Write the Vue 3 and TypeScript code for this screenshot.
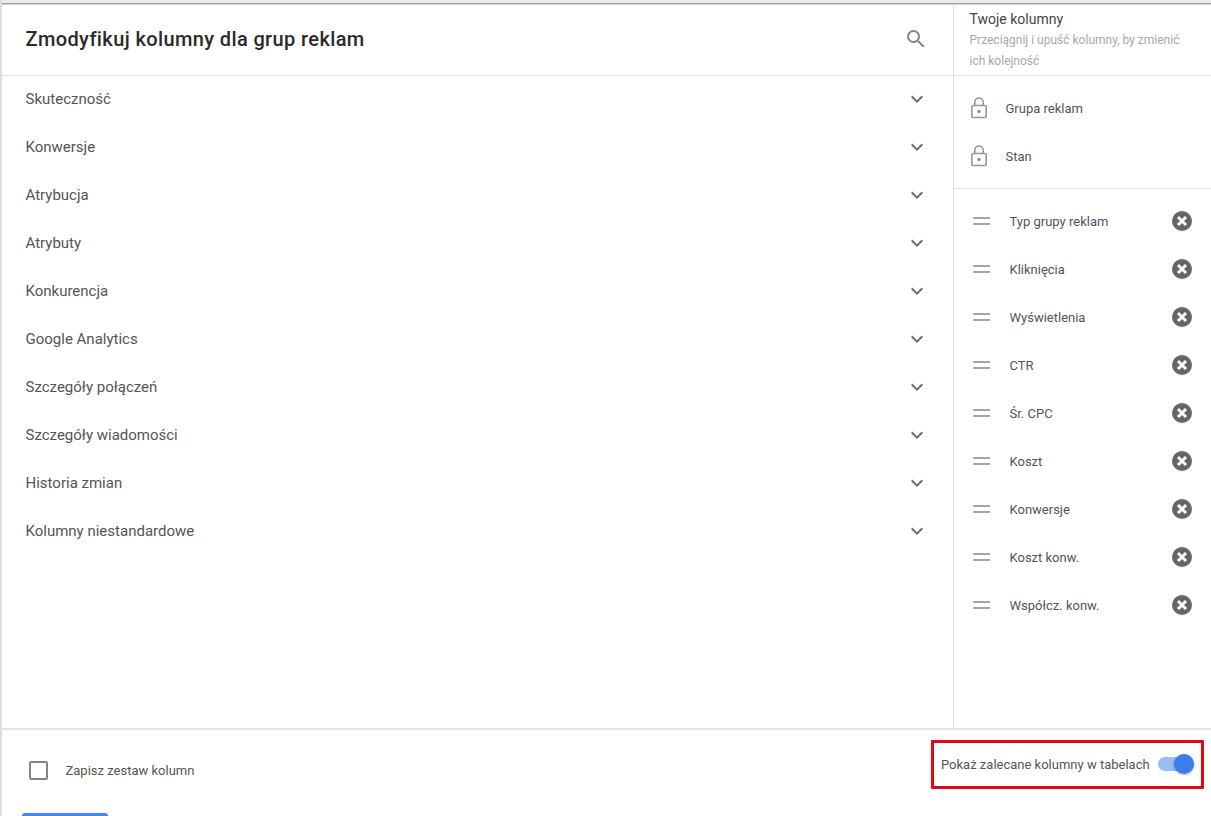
<script setup lang="ts">
const categories: string[] = ['Skuteczność','Konwersje','Atrybucja','Atrybuty','Konkurencja','Google Analytics','Szczegóły połączeń','Szczegóły wiadomości','Historia zmian','Kolumny niestandardowe']
const locked: string[] = ['Grupa reklam','Stan']
const cols: string[] = ['Typ grupy reklam','Kliknięcia','Wyświetlenia','CTR','Śr. CPC','Koszt','Konwersje','Koszt konw.','Współcz. konw.']
</script>

<template>
  <div class="page">
    <div class="main">
      <div class="left">
        <header class="head">
          <h1>Zmodyfikuj kolumny dla grup reklam</h1>
          <svg class="search" width="24" height="24" viewBox="0 0 24 24"><path fill="#858585" d="M15.5 14h-.79l-.28-.27A6.47 6.47 0 0 0 16 9.5 6.5 6.5 0 1 0 9.5 16c1.61 0 3.09-.59 4.23-1.57l.27.28v.79l5 4.99L20.49 19l-4.99-5zm-6 0C7.01 14 5 11.99 5 9.5S7.01 5 9.5 5 14 7.01 14 9.5 11.99 14 9.5 14z"/></svg>
        </header>
        <ul class="cats">
          <li v-for="c in categories" :key="c">
            <span>{{ c }}</span>
            <svg width="24" height="24" viewBox="0 0 24 24"><path fill="#6e6e6e" d="M7.41 8.59 12 13.17l4.59-4.58L18 10l-6 6-6-6z"/></svg>
          </li>
        </ul>
      </div>
      <aside class="right">
        <div class="r-head">
          <div class="r-title">Twoje kolumny</div>
          <div class="r-sub">Przeciągnij i upuść kolumny, by zmienić ich kolejność</div>
        </div>
        <div class="locked">
          <div v-for="l in locked" :key="l" class="lock-row">
            <svg width="24" height="24" viewBox="0 0 24 24" fill="none"><rect x="4.800" y="9.500" width="14.400" height="12" rx="1.200" stroke="#969696" stroke-width="1.600"/><path d="M7.800 9.500V6.200a4.200 4.200 0 0 1 8.400 0v3.300" stroke="#969696" stroke-width="1.600"/><circle cx="12" cy="15.500" r="1.500" fill="#777"/></svg>
            <span>{{ l }}</span>
          </div>
        </div>
        <div class="cols">
          <div v-for="c in cols" :key="c" class="col-row">
            <span class="drag"></span>
            <span class="col-name">{{ c }}</span>
            <svg width="24" height="24" viewBox="0 0 24 24"><circle cx="12" cy="12" r="10" fill="#666"/><path d="M8 8l8 8M16 8l-8 8" stroke="#fff" stroke-width="3"/></svg>
          </div>
        </div>
      </aside>
    </div>
    <footer class="foot">
      <div class="save">
        <span class="box"></span>
        <span>Zapisz zestaw kolumn</span>
      </div>
      <div class="highlight">
        <span>Pokaż zalecane kolumny w tabelach</span>
        <span class="toggle"><span class="knob"></span></span>
      </div>
      <button class="apply" type="button" aria-label="Zastosuj"></button>
    </footer>
  </div>
</template>

<style>
html, body { margin: 0; background: #fff; overflow: hidden; }
</style>

<style scoped>
.page {
  width: 1211px; height: 816px; box-sizing: border-box; overflow: hidden;
  background: linear-gradient(#ececec 0 3px, #a0a0a0 3px 4px, #d8d8d8 4px 5px, #fff 5px);
  border-left: 2px solid #dedede;
  padding-top: 5px; display: flex; flex-direction: column;
  font-family: Roboto, "Liberation Sans", sans-serif; color: #3c4043;
}
.main { height: 723px; display: flex; border-bottom: 2px solid #e4e4e4; flex: none; }
.left { width: 951px; flex: none; border-right: 1px solid #e0e0e0; }
.head { height: 71px; box-sizing: border-box; display: flex; align-items: center; justify-content: space-between; padding: 0 25px 2px 23.500px; border-bottom: 1px solid #e0e0e0; }
h1 { margin: 0; font-size: 20px; font-weight: 500; color: #2a2a2a; letter-spacing: .38px; }
.search { display: block; }
.cats { list-style: none; margin: 0; padding: 0; }
.cats li { height: 48px; display: flex; align-items: center; justify-content: space-between; padding: 0 24px 2px 23.500px; box-sizing: border-box; font-size: 15px; color: #555; }
.cats svg { margin-top: -1px; }
.right { flex: 1; min-width: 0; }
.r-head { height: 71px; box-sizing: border-box; padding: 4px 16px 0 15.500px; border-bottom: 1px solid #e0e0e0; }
.r-title { font-size: 14px; line-height: 20px; color: #444; }
.r-sub { font-size: 12px; line-height: 21px; color: #a8a8a8; margin-top: 1px; width: 225px; }
.locked { height: 113px; box-sizing: border-box; padding-top: 8px; border-bottom: 1px solid #e0e0e0; }
.lock-row { height: 48px; display: flex; align-items: center; padding-left: 13px; font-size: 13px; color: #555; }
.lock-row span { margin-left: 14.500px; }
.cols { padding-top: 8px; }
.col-row { height: 48px; display: flex; align-items: center; padding: 0 17.500px 0 19px; font-size: 13px; color: #555; }
.drag { width: 17px; height: 4px; border-top: 2px solid #a6a6a6; border-bottom: 2px solid #a6a6a6; }
.col-name { flex: 1; margin-left: 19.500px; }
.foot { flex: 1; position: relative; display: flex; justify-content: space-between; min-height: 0; }
.save { display: flex; align-items: flex-start; padding: 31px 0 0 27px; font-size: 13px; line-height: 20px; color: #555; }
.box { width: 15px; height: 15px; border: 2px solid #858585; border-radius: 2px; margin-right: 17.500px; flex: none; }
.highlight { position: absolute; right: 7px; top: 10px; width: 273px; height: 49px; box-sizing: border-box; border: 3px solid #dc0a12; border-radius: 1px; display: flex; align-items: center; padding: 0 7px 1px 7px; justify-content: space-between; font-size: 13px; color: #555; background: #fff; }
.toggle { position: relative; width: 36px; height: 14px; border-radius: 7px; background: #9dbcf2; flex: none; }
.knob { position: absolute; right: 0; top: -3px; width: 20px; height: 20px; border-radius: 50%; background: #3b7ded; box-shadow: 0 1px 3px rgba(0,0,0,.3); }
.apply { position: absolute; left: 20px; top: 83px; width: 86px; height: 20px; border: 0; border-radius: 3px; background: #4285f4; padding: 0; }
</style>
